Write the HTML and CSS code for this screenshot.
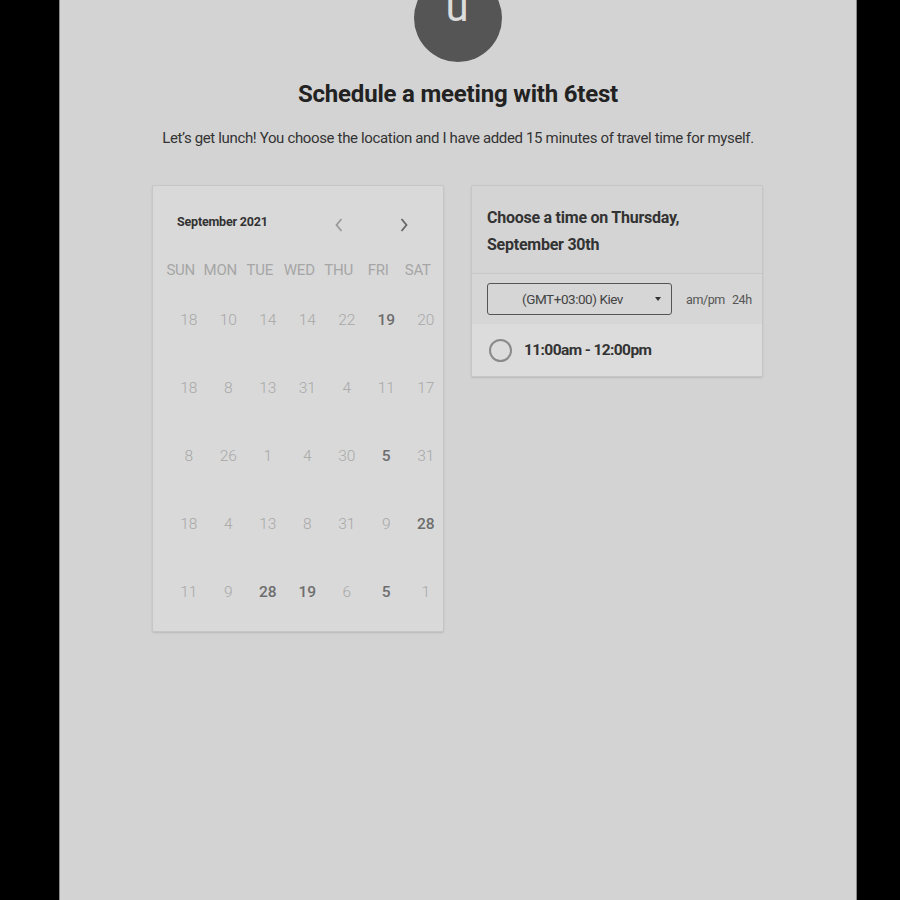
FILE: index.html
```html
<!DOCTYPE html>
<html>
<head>
<meta charset="utf-8">
<link rel="stylesheet" href="styles.css">
</head>
<body>
<div class="page">
  <div class="avatar"><span>u</span></div>
  <h1 class="title">Schedule a meeting with 6test</h1>
  <p class="subtitle">Let’s get lunch! You choose the location and I have added 15 minutes of travel time for myself.</p>
  <div class="cards">
    <div class="card calendar">
      <div class="cal-head">
        <div class="month">September 2021</div>
        <div class="navs">
          <svg class="nav prev" width="10" height="16" viewBox="0 0 10 16"><polyline points="7.5,2 2.5,8 7.5,14" fill="none" stroke="currentColor" stroke-width="1.8"/></svg>
          <svg class="nav next" width="10" height="16" viewBox="0 0 10 16"><polyline points="2.5,2 7.5,8 2.5,14" fill="none" stroke="currentColor" stroke-width="1.8"/></svg>
        </div>
      </div>
      <div class="grid">
        <div class="dow">SUN</div><div class="dow">MON</div><div class="dow">TUE</div><div class="dow">WED</div><div class="dow">THU</div><div class="dow">FRI</div><div class="dow">SAT</div>
        <div class="d">18</div><div class="d">10</div><div class="d">14</div><div class="d">14</div><div class="d">22</div><div class="d on">19</div><div class="d">20</div>
        <div class="d">18</div><div class="d">8</div><div class="d">13</div><div class="d">31</div><div class="d">4</div><div class="d">11</div><div class="d">17</div>
        <div class="d">8</div><div class="d">26</div><div class="d">1</div><div class="d">4</div><div class="d">30</div><div class="d on">5</div><div class="d">31</div>
        <div class="d">18</div><div class="d">4</div><div class="d">13</div><div class="d">8</div><div class="d">31</div><div class="d">9</div><div class="d on">28</div>
        <div class="d">11</div><div class="d">9</div><div class="d on">28</div><div class="d on">19</div><div class="d">6</div><div class="d on">5</div><div class="d">1</div>
      </div>
    </div>
    <div class="card times">
      <div class="times-head">Choose a time on Thursday,<br>September 30th</div>
      <div class="controls">
        <div class="select"><span class="tz">(GMT+03:00) Kiev</span><span class="caret"></span></div>
        <div class="fmt"><span>am/pm</span><span>24h</span></div>
      </div>
      <div class="slot">
        <span class="radio"></span>
        <span class="slot-text">11:00am - 12:00pm</span>
      </div>
    </div>
  </div>
</div>
</body>
</html>
```
FILE: styles.css
```css
html, body {
  margin: 0;
  padding: 0;
  background: #000;
  height: 100%;
  overflow: hidden;
}
body {
  font-family: Roboto, "Liberation Sans", sans-serif;
}
.page {
  margin-left: 59px;
  width: 796px;
  height: 900px;
  background: #d3d3d3;
  border-left: 1px solid #8a8a8a;
  border-right: 1px solid #8a8a8a;
  display: flex;
  flex-direction: column;
  align-items: center;
  overflow: hidden;
}
.avatar {
  margin-top: -26px;
  width: 88px;
  height: 88px;
  border-radius: 50%;
  background: #555555;
  color: #dcdcdc;
  display: flex;
  justify-content: center;
  align-items: center;
  flex-shrink: 0;
}
.avatar span {
  font-size: 42px;
  line-height: 1;
  margin-top: -22px;
  margin-left: -2px;
}
.title {
  margin: 17px 0 0;
  font-size: 24px;
  line-height: 30px;
  font-weight: 700;
  color: #222;
  letter-spacing: -0.2px;
}
.subtitle {
  margin: 19px 0 0;
  font-size: 15px;
  line-height: 20px;
  color: #333;
  letter-spacing: -0.35px;
}
.cards {
  margin-top: 37px;
  margin-left: -1px;
  display: flex;
  gap: 27px;
  align-items: flex-start;
}
.card {
  width: 290px;
  background: #d9d9d9;
  border: 1px solid #c6c6c6;
  border-radius: 2px;
  box-shadow: 0 1px 2px rgba(0,0,0,0.12);
}
.calendar {
  height: 445px;
}
.cal-head {
  height: 66px;
  display: flex;
  align-items: center;
  padding: 0 0 0 24px;
}
.month {
  font-size: 12.5px;
  font-weight: 700;
  color: #333;
  margin-top: 4px;
  letter-spacing: -0.2px;
}
.navs {
  margin-left: 66px;
  display: flex;
  gap: 55px;
  padding-top: 12px;
}
.nav.prev { color: #9a9a9a; }
.nav.next { color: #666; }
.grid {
  display: grid;
  grid-template-columns: repeat(7, 39.5px);
  grid-template-rows: 34px repeat(5, 68px);
  padding-left: 8px;
}
.dow {
  font-size: 15px;
  color: #a6a6a6;
  display: flex;
  justify-content: center;
  align-items: center;
  letter-spacing: -0.2px;
  padding-top: 2px;
}
.d {
  font-size: 15.5px;
  font-weight: 300;
  color: #a8a8a8;
  display: flex;
  justify-content: center;
  align-items: center;
  padding-left: 16px;
}
.d.on {
  color: #6e6e6e;
  font-weight: 500;
}
.times-head {
  background: #d4d4d4;
  padding: 18px 15px 15px;
  font-size: 16px;
  line-height: 27px;
  font-weight: 700;
  color: #333;
  letter-spacing: -0.25px;
  border-bottom: 1px solid #c8c8c8;
}
.controls {
  height: 50px;
  display: flex;
  align-items: center;
  padding-left: 15px;
  background: #d6d6d6;
}
.select {
  height: 30px;
  border: 1px solid #555;
  border-radius: 3px;
  display: flex;
  align-items: center;
  padding-left: 34px;
  box-sizing: content-box;
  width: 149px;
}
.tz {
  font-size: 13.5px;
  color: #444;
  flex: 1;
  letter-spacing: -0.45px;
}
.caret {
  width: 0;
  height: 0;
  border-left: 3.5px solid transparent;
  border-right: 3.5px solid transparent;
  border-top: 4px solid #333;
  margin-right: 10px;
}
.fmt {
  margin-left: 14px;
  display: flex;
  gap: 7px;
  font-size: 12.5px;
  color: #555;
  letter-spacing: -0.4px;
}
.slot {
  height: 52px;
  background: #dcdcdc;
  display: flex;
  align-items: center;
  padding-left: 17px;
}
.radio {
  width: 19px;
  height: 19px;
  border: 2px solid #8a8a8a;
  border-radius: 50%;
}
.slot-text {
  margin-left: 12px;
  font-size: 15.5px;
  font-weight: 700;
  color: #333;
  letter-spacing: -0.6px;
}
```
